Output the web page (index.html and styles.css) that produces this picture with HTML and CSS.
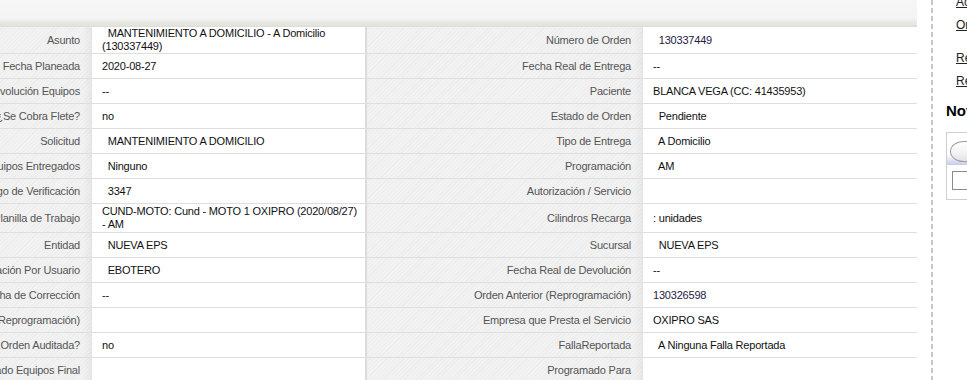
FILE: index.html
```html
<!DOCTYPE html>
<html lang="es">
<head>
<meta charset="utf-8">
<title>Orden 130337449</title>
<link rel="stylesheet" href="styles.css">
</head>
<body>
<div class="page">
  <div class="main">
    <div class="topbar"></div>
    <div class="grid">
      <div class="lbl">Asunto</div>
      <div class="val val1">&nbsp; MANTENIMIENTO A DOMICILIO - A Domicilio (130337449)</div>
      <div class="lbl">Número de Orden</div>
      <div class="val val2 num">&nbsp; 130337449</div>

      <div class="lbl">Fecha Planeada</div>
      <div class="val val1">2020-08-27</div>
      <div class="lbl">Fecha Real de Entrega</div>
      <div class="val val2">--</div>

      <div class="lbl">Fecha de Devolución Equipos</div>
      <div class="val val1">--</div>
      <div class="lbl">Paciente</div>
      <div class="val val2">BLANCA VEGA (CC: 41435953)</div>

      <div class="lbl">¿Se Cobra Flete?</div>
      <div class="val val1">no</div>
      <div class="lbl">Estado de Orden</div>
      <div class="val val2">&nbsp; Pendiente</div>

      <div class="lbl">Solicitud</div>
      <div class="val val1">&nbsp; MANTENIMIENTO A DOMICILIO</div>
      <div class="lbl">Tipo de Entrega</div>
      <div class="val val2">&nbsp; A Domicilio</div>

      <div class="lbl">Equipos Entregados</div>
      <div class="val val1">&nbsp; Ninguno</div>
      <div class="lbl">Programación</div>
      <div class="val val2">&nbsp; AM</div>

      <div class="lbl">Código de Verificación</div>
      <div class="val val1">&nbsp; 3347</div>
      <div class="lbl">Autorización / Servicio</div>
      <div class="val val2"></div>

      <div class="lbl tall">Planilla de Trabajo</div>
      <div class="val val1 tall">CUND-MOTO: Cund - MOTO 1 OXIPRO (2020/08/27) - AM</div>
      <div class="lbl tall">Cilindros Recarga</div>
      <div class="val val2 tall">: unidades</div>

      <div class="lbl">Entidad</div>
      <div class="val val1">&nbsp; NUEVA EPS</div>
      <div class="lbl">Sucursal</div>
      <div class="val val2">&nbsp; NUEVA EPS</div>

      <div class="lbl">Programación Por Usuario</div>
      <div class="val val1">&nbsp; EBOTERO</div>
      <div class="lbl">Fecha Real de Devolución</div>
      <div class="val val2">--</div>

      <div class="lbl">Fecha de Corrección</div>
      <div class="val val1">--</div>
      <div class="lbl">Orden Anterior (Reprogramación)</div>
      <div class="val val2 num">130326598</div>

      <div class="lbl">Orden Siguiente (Reprogramación)</div>
      <div class="val val1"></div>
      <div class="lbl">Empresa que Presta el Servicio</div>
      <div class="val val2">OXIPRO SAS</div>

      <div class="lbl">¿Orden Auditada?</div>
      <div class="val val1">no</div>
      <div class="lbl">FallaReportada</div>
      <div class="val val2">&nbsp; A Ninguna Falla Reportada</div>

      <div class="lbl">Estado Equipos Final</div>
      <div class="val val1"></div>
      <div class="lbl">Programado Para</div>
      <div class="val val2"></div>
    </div>
  </div>
  <div class="gutter"></div>
  <div class="dashline"></div>
  <div class="side">
    <a class="slink first" href="#">Actualizar</a>
    <a class="slink" href="#">Orden</a>
    <a class="slink gap" href="#">Reprogramar</a>
    <a class="slink" href="#">Reporte</a>
    <div class="stitle">Novedades</div>
    <div class="sbox">
      <div class="tabs"><span class="pill">Nueva</span></div>
      <div class="sinput"></div>
    </div>
  </div>
</div>
</body>
</html>
```
FILE: styles.css
```css
html, body {
  margin: 0;
  padding: 0;
  background: #fff;
  overflow: hidden;
}
body {
  font-family: "Liberation Sans", Arial, sans-serif;
  font-size: 11px;
  color: #000;
  width: 967px;
  height: 380px;
}
.page {
  display: flex;
  align-items: stretch;
  height: 380px;
}
.main {
  width: 917px;
  flex: none;
}
.topbar {
  height: 27px;
  background: linear-gradient(to bottom, #f6f6f6 0, #f4f4f4 68%, #e9eae5 80%, #e4e5df 92%, #dcddd7 100%);
}
.grid {
  display: grid;
  grid-template-columns: 92px 275px 276px 274px;
  border-right: 1px solid #dcdcdc;
  width: 917px;
  box-sizing: border-box;
}
.lbl, .val {
  box-sizing: border-box;
  min-height: 25px;
  border-bottom: 1px solid #dedede;
  display: flex;
  align-items: center;
  line-height: 13px;
  overflow: hidden;
  letter-spacing: -0.2px;
}
.tall {
  padding-top: 1px;
  padding-bottom: 1px;
}
.lbl {
  justify-content: flex-end;
  white-space: nowrap;
  color: #555;
  padding-right: 11px;
  border-right: 1px solid #e2e2e2;
  background:
    linear-gradient(to right, rgba(0,0,0,0) 0, rgba(0,0,0,0) calc(100% - 9px), rgba(0,0,0,0.035) 100%),
    repeating-linear-gradient(135deg, #f2f2f2 0, #f2f2f2 2px, #ededed 2px, #ededed 3px);
}
.val {
  padding-left: 10px;
  padding-right: 2px;
  background: #fff;
  color: #111;
}
.val1 {
  border-right: 2px solid #dcdcdc;
}
.val.num {
  color: #26213f;
}
.gutter {
  width: 14px;
  flex: none;
}
.dashline {
  width: 2px;
  flex: none;
  background: repeating-linear-gradient(to bottom, #c8c8c8 0, #c8c8c8 5px, transparent 5px, transparent 8px);
}
.side {
  flex: none;
  width: 300px;
  padding-left: 13px;
  display: flex;
  flex-direction: column;
  align-items: flex-start;
}
.slink {
  font-size: 12px;
  line-height: 15px;
  color: #222;
  text-decoration: underline;
  margin-left: 10px;
  margin-bottom: 8px;
}
.slink.first {
  margin-top: -5px;
}
.slink.gap {
  margin-top: 10px;
}
.stitle {
  font-size: 15px;
  font-weight: bold;
  color: #000;
  margin-top: 5px;
  line-height: 18px;
}
.sbox {
  margin-top: 12px;
  width: 260px;
  height: 68px;
  box-sizing: border-box;
  border: 1px solid #cfcfcf;
  padding: 7px 0 0 3px;
}
.tabs {
  height: 25px;
  box-sizing: border-box;
  padding-top: 1px;
  margin-left: -3px;
  padding-left: 3px;
  background: linear-gradient(to bottom, #fff 0, #fff 60%, #dcdcf4 85%, #c9c9ee 100%);
}
.pill {
  display: inline-block;
  height: 21px;
  box-sizing: border-box;
  padding: 0 20px;
  border: 1px solid #a0a0a0;
  border-radius: 14px / 11px;
  background: linear-gradient(to bottom, #ffffff 0, #f2f2f2 60%, #e4e4e4 100%);
  font-size: 12px;
  line-height: 19px;
  color: #333;
}
.sinput {
  margin-top: 6px;
  margin-left: 2px;
  width: 200px;
  height: 19px;
  box-sizing: border-box;
  border: 1px solid #8a8a8a;
  background: #fff;
}
```
